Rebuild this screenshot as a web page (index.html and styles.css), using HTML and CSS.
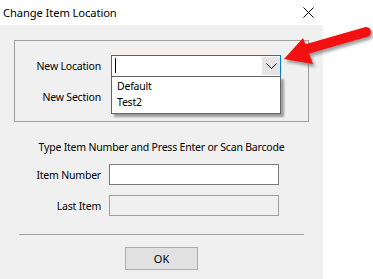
FILE: index.html
```html
<!DOCTYPE html>
<html lang="en">
<head>
  <meta charset="UTF-8" />
  <meta name="viewport" content="width=device-width, initial-scale=1.0" />
  <title>Change Item Location</title>
  <link rel="stylesheet" href="styles.css">
</head>
<body>

  <div class="screen">
    <div class="dialog">
      <div class="titlebar">
        <span class="title">Change Item Location</span>
        <svg class="close" width="11" height="11" viewBox="0 0 11 11">
          <path d="M0.5 0.5 L10.5 10.5 M10.5 0.5 L0.5 10.5" stroke="#000" stroke-width="1" fill="none" />
        </svg>
      </div>

      <div class="dialog-body">
        <div class="group">
          <div class="row">
            <label class="label">New Location</label>
            <div class="combo focused">
              <span class="caret"></span>
              <span class="combo-button">
                <svg width="11" height="6" viewBox="0 0 11 6">
                  <path d="M0.5 0.5 L5.5 5.5 L10.5 0.5" stroke="#000" stroke-width="1" fill="none" />
                </svg>
              </span>
              <ul class="dropdown">
                <li>Default</li>
                <li>Test2</li>
              </ul>
            </div>
          </div>
          <div class="row">
            <label class="label">New Section</label>
            <div class="combo"></div>
          </div>
        </div>

        <p class="hint">Type Item Number and Press Enter or Scan Barcode</p>

        <div class="field-row">
          <label class="label">Item Number</label>
          <div class="textbox"></div>
        </div>
        <div class="field-row">
          <label class="label">Last Item</label>
          <div class="textbox disabled"></div>
        </div>

        <hr class="separator">

        <div class="buttons">
          <button class="ok-button">OK</button>
        </div>
      </div>
    </div>

    <!-- red arrow pointing at the combo -->
    <svg class="arrow" width="98" height="60" viewBox="275 20 98 60">
      <defs>
        <filter id="soft" x="-20%" y="-20%" width="140%" height="140%">
          <feGaussianBlur stdDeviation="1.5" />
        </filter>
      </defs>
      <g fill="#555" stroke="#555" opacity="0.55" filter="url(#soft)" transform="translate(2 3)">
        <line x1="300" y1="51" x2="366" y2="32" stroke-width="10" stroke-linecap="round" />
        <polygon points="284,59 303,38 313,64" stroke="none" />
      </g>
      <g fill="#f21010" stroke="#f21010">
        <line x1="300" y1="51" x2="366" y2="32" stroke-width="10" stroke-linecap="round" />
        <polygon points="284,59 303,38 313,64" stroke="none" />
      </g>
    </svg>
  </div>

</body>
</html>
```

FILE: styles.css
```css
body {
  margin: 0;
  background: #fff;
  font-family: 'Noto Sans', 'Open Sans', sans-serif;
  font-size: 10.5px;
  letter-spacing: -0.2px;
  color: #000;
}

.screen {
  position: relative;
  width: 373px;
  height: 279px;
  overflow: hidden;
}

.dialog {
  width: 323px;
  height: 279px;
  display: flex;
  flex-direction: column;
}

.titlebar {
  height: 25px;
  background: #fff;
  display: flex;
  align-items: center;
  justify-content: space-between;
  padding: 0 9px 0 3px;
  font-size: 11.2px;
  letter-spacing: -0.1px;
}

.close {
  display: block;
}

.dialog-body {
  flex: 1;
  background: #f0f0f0;
  padding-top: 15px;
}

.group {
  margin-left: 14px;
  width: 293px;
  border: 1px solid #a0a0a0;
  padding-top: 14px;
  box-sizing: content-box;
  height: 66px;
  display: flex;
  flex-direction: column;
  gap: 9px;
}

.row {
  display: flex;
  align-items: center;
  gap: 10px;
}

.row .label {
  width: 86px;
  text-align: right;
}

.combo {
  position: relative;
  width: 168px;
  height: 20px;
  border: 1px solid #7a7a7a;
  background: #fff;
}

.combo.focused {
  border-color: #0078d7;
  z-index: 2;
}

.caret {
  position: absolute;
  left: 3px;
  top: 2px;
  width: 1px;
  height: 15px;
  background: #000;
}

.combo-button {
  position: absolute;
  right: 0;
  top: 1px;
  width: 18px;
  height: 18px;
  background: #e5e5e5;
  display: flex;
  align-items: center;
  justify-content: center;
}

.dropdown {
  position: absolute;
  left: -1px;
  top: 20px;
  width: 168px;
  margin: 0;
  padding: 1px 0 3px;
  list-style: none;
  background: #fff;
  border: 1px solid #646464;
  box-shadow: 3px 3px 2px rgba(0, 0, 0, 0.35);
}

.dropdown li {
  height: 16px;
  line-height: 16px;
  padding-left: 5px;
}

.hint {
  margin: 17px 0 0;
  height: 17px;
  line-height: 17px;
  text-align: center;
}

.field-row {
  display: flex;
  align-items: center;
  gap: 8px;
  margin-top: 8px;
}

.field-row + .field-row {
  margin-top: 10px;
}

.field-row .label {
  width: 101px;
  text-align: right;
}

.textbox {
  width: 168px;
  height: 19px;
  border: 1px solid #7a7a7a;
  background: #fff;
}

.textbox.disabled {
  background: #f0f0f0;
  border-color: #a0a0a0;
}

.separator {
  margin: 18px 0 0 19px;
  width: 285px;
  height: 0;
  border: none;
  border-top: 1px solid #a0a0a0;
}

.buttons {
  display: flex;
  justify-content: center;
  margin-top: 12px;
}

.ok-button {
  width: 73px;
  height: 23px;
  background: #e1e1e1;
  border: 1px solid #adadad;
  font-family: inherit;
  font-size: 11px;
  color: #000;
  padding: 0;
}

.arrow {
  position: absolute;
  left: 275px;
  top: 20px;
}
```
